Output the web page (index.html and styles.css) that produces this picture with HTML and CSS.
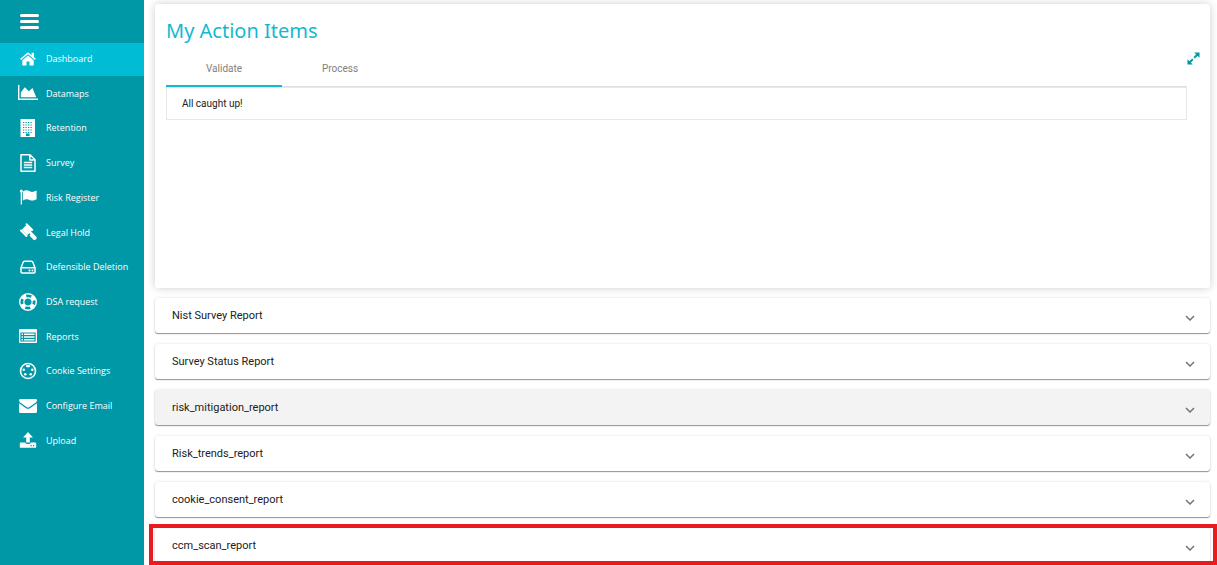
FILE: index.html
```html
<!DOCTYPE html>
<html lang="en">
<head>
    <meta charset="UTF-8">
    <title>Dashboard</title>
    <meta name="viewport" content="width=device-width, initial-scale=1">
    <link rel="stylesheet" href="styles.css">
</head>
<body>
    <div class="layout">
        <nav class="sidebar">
            <button type="button" class="menu-btn" aria-label="Menu">
                <svg width="19" height="16" viewBox="0 0 19 16"><path d="M1.500 1.500h16M1.500 7.500h16M1.500 13.500h16" stroke="currentColor" stroke-width="3" stroke-linecap="round"/></svg>
            </button>
            <ul class="menu">
                <li><a href="#" class="active">
                    <svg viewBox="0 0 20 20"><path d="M10 6.500l5.700 4.700v5.300h-4.200v-4h-3v4H4.300v-5.300z"/><path d="M2.600 10.400L10 4.200l7.400 6.200" class="line" stroke-width="1.500"/><path d="M13.600 3.700h2.400v5l-2.400-2z"/></svg>
                    <span>Dashboard</span></a></li>
                <li><a href="#">
                    <svg viewBox="0 0 20 20"><path d="M0 2h1.400v13.600H20V17H0z"/><path d="M2.800 14.300V9.500l4-5.300 4 4 3.700-3.200 3.700 9.300z"/></svg>
                    <span>Datamaps</span></a></li>
                <li><a href="#">
                    <svg viewBox="0 0 20 20"><path fill-rule="evenodd" d="M2.500 1h14.500v18H2.500zM8 15.500V18h3.500v-2.500z"/><path class="line cut" stroke-width="1" stroke-dasharray="1.300 1.200" d="M5 4.500h10M5 7h10M5 9.500h10M5 12h10M5 14.500h10"/></svg>
                    <span>Retention</span></a></li>
                <li><a href="#">
                    <svg viewBox="0 0 20 20"><path d="M3 1.800h9l5 5v11.400H3zM11.800 2v5H17M5.800 9.500h8.400M5.800 12h8.400M5.800 14.500h8.400" class="line" stroke-width="1.500" stroke-linejoin="round"/></svg>
                    <span>Survey</span></a></li>
                <li><a href="#">
                    <svg viewBox="0 0 20 20"><circle cx="3.300" cy="4" r="1.500"/><path d="M2.700 4h1.300v13.500H2.700z"/><path d="M4.800 4.600c3-1.700 4.800-1.500 7-.3 2 1 3.600.7 6.800-.8v8.700c-3 1.600-4.800 1.700-7 .7-2-1.100-4-1-6.800.7z"/></svg>
                    <span>Risk Register</span></a></li>
                <li><a href="#">
                    <svg viewBox="0 0 20 20"><path d="M3.700 7.800L8.900 2.600l5.500 5.500-5.200 5.200z"/><path d="M3 8.500l5.500 5.500M8.600 2.200l5.700 5.700" stroke="currentColor" stroke-width="2" stroke-linecap="round"/><path d="M10.200 10.300l2-1.800 6.300 6.400q.8 1-.2 2l-.9.900q-1 .9-2 0l-4-4.300 1-1.300z"/></svg>
                    <span>Legal Hold</span></a></li>
                <li><a href="#">
                    <svg viewBox="0 0 20 20"><path d="M3 11l2-5.500Q5.400 4.300 6.500 4.300h7Q14.600 4.300 15 5.500l2 5.500M3 10.800h14v4.200q0 1-1 1H4q-1 0-1-1z" class="line" stroke-width="1.500"/><circle cx="11.500" cy="13.400" r="1"/><circle cx="14.500" cy="13.400" r="1"/></svg>
                    <span>Defensible Deletion</span></a></li>
                <li><a href="#">
                    <svg viewBox="0 0 20 20"><circle class="line" cx="10" cy="10" r="8.300" stroke-width="1.400"/><circle class="line" cx="10" cy="10" r="4.200" stroke-width="1.200"/><circle class="line" cx="10" cy="10" r="6.300" stroke-width="4" stroke-dasharray="4.600 5.296" stroke-dashoffset="-2.648"/></svg>
                    <span>DSA request</span></a></li>
                <li><a href="#">
                    <svg viewBox="0 0 20 20"><path fill-rule="evenodd" d="M2 3h16q1 0 1 1v12q0 1-1 1H2q-1 0-1-1V4q0-1 1-1zm.3 3.600v9h15.400v-9z"/><path d="M3.500 8.300h1.500M3.500 11h1.500M3.500 13.700h1.500M6 8.300h10.500M6 11h10.500M6 13.700h10.500" stroke="currentColor" stroke-width="1.500"/></svg>
                    <span>Reports</span></a></li>
                <li><a href="#">
                    <svg viewBox="0 0 20 20"><circle class="line" cx="10" cy="10" r="7.500" stroke-width="1.600"/><rect x="8" y="4" width="4" height="2.200" rx="1"/><circle cx="5.700" cy="8.700" r="1.300"/><circle cx="14.300" cy="8.700" r="1.300"/><circle cx="7.300" cy="13.300" r="1.300"/><circle cx="12.700" cy="13.300" r="1.300"/></svg>
                    <span>Cookie Settings</span></a></li>
                <li><a href="#">
                    <svg viewBox="0 0 20 20"><path d="M2.500 3h15Q19 3 19 4.300 19 5.500 17.800 6.400L11.500 11q-1.500 1-3 0L2.200 6.400Q1 5.500 1 4.300 1 3 2.500 3z"/><path d="M1 7.200l7 5q2 1.300 4 0l7-5v8.300q0 1.500-1.500 1.500h-15Q1 17 1 15.500z"/></svg>
                    <span>Configure Email</span></a></li>
                <li><a href="#">
                    <svg viewBox="0 0 20 20"><path d="M10 2l5 5.500h-3.200v5H8.200v-5H5z"/><path fill-rule="evenodd" d="M2.700 12.500h4.500q.5 1.400 1.600 1.400h2.400q1.100 0 1.600-1.400h4.500q.9 0 .9.900v3.500q0 .9-.9.900H2.700q-.9 0-.9-.9v-3.500q0-.9.900-.9zM12.500 15v1.200h1.200V15zM15 15v1.200h1.200V15z"/></svg>
                    <span>Upload</span></a></li>
            </ul>
        </nav>

        <main class="content">
            <section class="card">
                <div class="card-main">
                    <h1>My Action Items</h1>
                    <div class="tabs" role="tablist">
                        <button type="button" role="tab" aria-selected="true" class="tab active">Validate</button>
                        <button type="button" role="tab" aria-selected="false" class="tab">Process</button>
                    </div>
                    <div class="tab-panel" role="tabpanel">All caught up!</div>
                </div>
                <button type="button" class="expand-btn" aria-label="Expand">
                    <svg width="13" height="13" viewBox="0 0 14 14"><path d="M7.800 0.500h5.700v5.700zM0.500 7.800v5.700h5.700z"/><path d="M11.500 2.500L7.700 6.300M6.300 7.700l-3.800 3.800" stroke="currentColor" stroke-width="2.200"/></svg>
                </button>
            </section>

            <div class="reports">
                <button type="button" class="report">Nist Survey Report
                    <svg viewBox="0 0 10 6"><path d="M1 1l4 4 4-4"/></svg></button>
                <button type="button" class="report">Survey Status Report
                    <svg viewBox="0 0 10 6"><path d="M1 1l4 4 4-4"/></svg></button>
                <button type="button" class="report hovered">risk_mitigation_report
                    <svg viewBox="0 0 10 6"><path d="M1 1l4 4 4-4"/></svg></button>
                <button type="button" class="report">Risk_trends_report
                    <svg viewBox="0 0 10 6"><path d="M1 1l4 4 4-4"/></svg></button>
                <button type="button" class="report">cookie_consent_report
                    <svg viewBox="0 0 10 6"><path d="M1 1l4 4 4-4"/></svg></button>
                <button type="button" class="report highlighted">ccm_scan_report
                    <svg viewBox="0 0 10 6"><path d="M1 1l4 4 4-4"/></svg></button>
            </div>
        </main>
    </div>
</body>
</html>
```

FILE: styles.css
```css
* { box-sizing: border-box; }
body { margin: 0; background: #fff; font-family: Roboto, Arial, sans-serif; font-size: 11px; color: #212121; }
button { font: inherit; color: inherit; border: none; background: none; padding: 0; cursor: pointer; }
svg { display: block; fill: currentColor; }

.layout { display: flex; min-height: 100vh; }

/* Sidebar */
.sidebar {
    flex: 0 0 144px;
    background: #0097a7;
    color: #fff;
    font-family: "Open Sans", sans-serif;
    font-size: 9px;
}
.menu-btn { display: block; padding: 14px 20px 13px; }
.menu {
    list-style: none;
    margin: 0;
    padding: 0;
    height: 415px;
    display: flex;
    flex-direction: column;
    justify-content: space-between;
}
.menu a {
    display: flex;
    align-items: center;
    gap: 8px;
    height: 33px;
    padding: 0 0 2px 18px;
    color: #fff;
    text-decoration: none;
    white-space: nowrap;
}
.menu a.active { background: #00bcd4; }
.menu svg { flex: none; width: 20px; height: 20px; }
.menu .line { fill: none; stroke: currentColor; }
.menu .cut { stroke: #0097a7; }

/* Content */
.content { flex: 1; min-width: 0; padding: 4px 7px 2px 11px; }
.card {
    display: flex;
    align-items: flex-start;
    min-height: 284px;
    padding: 12px 10px 12px 11px;
    border-radius: 3px;
    box-shadow: 0 0 8px rgba(0,0,0,0.2);
}
.card-main { flex: 1; }
h1 {
    margin: 0 0 5px;
    font: 400 20px/30px "Noto Sans", sans-serif;
    color: #12b9d0;
}
.tabs { display: flex; border-bottom: 1px solid #e0e0e0; }
.tab {
    width: 116px;
    height: 36px;
    margin-bottom: -1px;
    border-bottom: 2px solid transparent;
    font-size: 10px;
    color: #808080;
}
.tab.active { border-bottom-color: #12b9d0; }
.tab-panel {
    padding: 0 15px;
    font-size: 10px;
    line-height: 31px;
    border: 1px solid #e8e8e8;
}
.expand-btn { margin-top: 36px; color: #0097a7; }

.reports {
    display: flex;
    flex-direction: column;
    gap: 11px;
    margin-top: 10px;
}
.report {
    position: relative;
    display: flex;
    align-items: center;
    justify-content: space-between;
    height: 35px;
    padding: 0 15px 0 17px;
    border-radius: 3px;
    background: #fff;
    box-shadow: 0 1px 1px rgba(0,0,0,0.4), 0 0 3px rgba(0,0,0,0.12);
}
.report svg {
    width: 10px;
    height: 6px;
    margin-top: 4px;
    fill: none;
    stroke: #757575;
    stroke-width: 1.5;
}
.report.hovered { background: #f3f3f3; }
.report.highlighted::after {
    content: "";
    position: absolute;
    inset: -4px -7px -2px -6px;
    border: 4px solid #e81c1f;
}
```
